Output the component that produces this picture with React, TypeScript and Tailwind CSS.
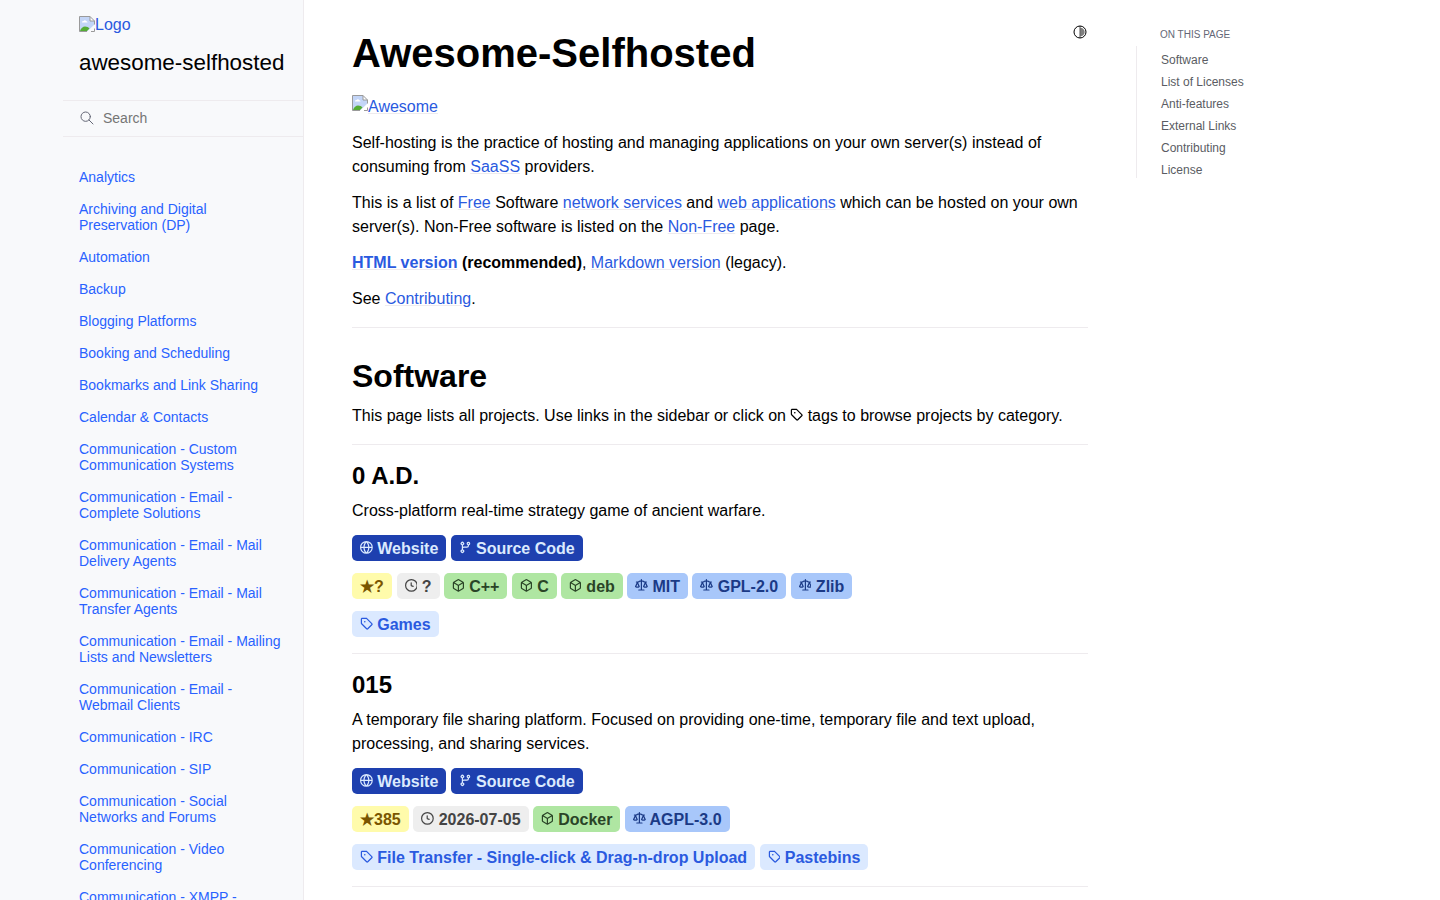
import type { ReactNode } from 'react';
import { clsx } from 'clsx';

const ICONS = {
  tag: 'M1 7.775V2.75C1 1.784 1.784 1 2.75 1h5.025c.464 0 .91.184 1.238.513l6.25 6.25a1.75 1.75 0 0 1 0 2.474l-5.026 5.026a1.75 1.75 0 0 1-2.474 0l-6.25-6.25A1.752 1.752 0 0 1 1 7.775Zm1.5 0c0 .066.026.13.073.177l6.25 6.25a.25.25 0 0 0 .354 0l5.025-5.025a.25.25 0 0 0 0-.354l-6.25-6.25a.25.25 0 0 0-.177-.073H2.75a.25.25 0 0 0-.25.25ZM6 5a1 1 0 1 1 0 2 1 1 0 0 1 0-2Z',
  clock:
    'M8 0a8 8 0 1 1 0 16A8 8 0 0 1 8 0ZM1.5 8a6.5 6.5 0 1 0 13 0 6.5 6.5 0 0 0-13 0Zm7-3.25v2.992l2.028.812a.75.75 0 0 1-.557 1.392l-2.5-1A.751.751 0 0 1 7 8.25v-3.5a.75.75 0 0 1 1.5 0Z',
  globe:
    'M8 0a8 8 0 1 1 0 16A8 8 0 0 1 8 0ZM5.78 8.75a9.64 9.64 0 0 0 1.363 4.177c.255.426.542.832.857 1.215.245-.296.551-.705.857-1.215A9.64 9.64 0 0 0 10.22 8.75Zm4.44-1.5a9.64 9.64 0 0 0-1.363-4.177c-.307-.51-.612-.919-.857-1.215a9.927 9.927 0 0 0-.857 1.215A9.64 9.64 0 0 0 5.78 7.25Zm-5.944 1.5H1.543a6.507 6.507 0 0 0 4.666 5.5c-.123-.181-.24-.365-.352-.552-.715-1.192-1.437-2.874-1.581-4.948Zm-2.733-1.5h2.733c.144-2.074.866-3.756 1.58-4.948.12-.197.237-.381.353-.552a6.507 6.507 0 0 0-4.666 5.5Zm10.181 1.5c-.144 2.074-.866 3.756-1.58 4.948-.12.197-.237.381-.353.552a6.507 6.507 0 0 0 4.666-5.5Zm2.733-1.5a6.507 6.507 0 0 0-4.666-5.5c.123.181.24.365.353.552.714 1.192 1.436 2.874 1.58 4.948Z',
  branch:
    'M9.5 3.25a2.25 2.25 0 1 1 3 2.122V6A2.5 2.5 0 0 1 10 8.5H6a1 1 0 0 0-1 1v1.128a2.251 2.251 0 1 1-1.5 0V5.372a2.25 2.25 0 1 1 1.5 0v1.836A2.493 2.493 0 0 1 6 7h4a1 1 0 0 0 1-1v-.628A2.25 2.25 0 0 1 9.5 3.25Zm-6 0a.75.75 0 1 0 1.5 0 .75.75 0 0 0-1.5 0Zm8.25-.75a.75.75 0 1 0 0 1.5.75.75 0 0 0 0-1.5ZM4.25 12a.75.75 0 1 0 0 1.5.75.75 0 0 0 0-1.5Z',
  package:
    'm8.878.392 5.25 3.045c.54.314.872.89.872 1.514v6.098a1.75 1.75 0 0 1-.872 1.514l-5.25 3.045a1.75 1.75 0 0 1-1.756 0l-5.25-3.045A1.75 1.75 0 0 1 1 11.049V4.951c0-.624.332-1.201.872-1.514L7.122.392a1.75 1.75 0 0 1 1.756 0ZM7.875 1.69l-4.63 2.685L8 7.133l4.755-2.758-4.63-2.685a.248.248 0 0 0-.25 0ZM2.5 5.677v5.372c0 .09.047.171.125.216l4.625 2.683V8.432Zm6.25 8.271 4.625-2.683a.25.25 0 0 0 .125-.216V5.677L8.75 8.432Z',
  law: 'M8.75.75V2h.985c.304 0 .603.08.867.231l1.29.736c.038.022.08.033.124.033h2.234a.75.75 0 0 1 0 1.5h-.427l2.111 4.692a.75.75 0 0 1-.154.838l-.53-.53.529.531-.001.002-.002.002-.006.006-.006.005-.01.01-.045.04c-.21.176-.441.327-.686.45C14.556 10.78 13.88 11 13 11a4.498 4.498 0 0 1-2.023-.454 3.544 3.544 0 0 1-.686-.45l-.045-.04-.016-.015-.006-.006-.004-.004v-.001a.75.75 0 0 1-.154-.838L12.178 4.5h-.162c-.305 0-.604-.079-.868-.231l-1.29-.736a.245.245 0 0 0-.124-.033H8.75V13h2.5a.75.75 0 0 1 0 1.5h-6.5a.75.75 0 0 1 0-1.5h2.5V3.5h-.984a.245.245 0 0 0-.124.033l-1.289.737c-.265.15-.564.23-.869.23h-.162l2.112 4.692a.75.75 0 0 1-.154.838l-.53-.53.529.531-.001.002-.002.002-.006.006-.016.015-.045.04c-.21.176-.441.327-.686.45C4.556 10.78 3.88 11 3 11a4.498 4.498 0 0 1-2.023-.454 3.544 3.544 0 0 1-.686-.45l-.045-.04-.016-.015-.006-.006-.004-.004v-.001a.75.75 0 0 1-.154-.838L2.178 4.5H1.75a.75.75 0 0 1 0-1.5h2.234a.249.249 0 0 0 .125-.033l1.288-.737c.265-.15.564-.23.869-.23h.984V.75a.75.75 0 0 1 1.5 0Zm2.945 8.477c.285.135.718.273 1.305.273s1.02-.138 1.305-.273L13 6.327Zm-10 0c.285.135.718.273 1.305.273s1.02-.138 1.305-.273L3 6.327Z',
};

type IconName = keyof typeof ICONS;

const Octicon: React.FC<{ name: IconName }> = ({ name }) => (
  <svg
    viewBox="0 0 16 16"
    className="mt-px inline-block size-[12.8px] align-text-top"
    fill="currentColor"
    aria-hidden="true"
  >
    <path d={ICONS[name]} />
  </svg>
);

const MissingImage = () => (
  <svg viewBox="0 0 16 16" className="size-4 shrink-0" aria-hidden="true">
    <path d="M.5.5H11L15.5 5v3.5l-7.500 7H.5z" fill="#c3d5f7" />
    <path d="M3 6.5c0-1 .8-1.6 1.6-1.4C5 4 6.8 4 7.2 5.2c1 0 1.3.6 1.3 1.3z" fill="#fff" />
    <path d="M1 15c1-3 3-4.5 5-4.5 2 0 3.5.8 4.5 2L8 15z" fill="#55ad35" />
    <path d="M11 .5V5h4.500" fill="#fff" stroke="#9a9a9a" />
    <path d="M8 15.5H.5V.5H11L15.5 5v3.5M12 15.5h3.500v-3" fill="none" stroke="#9a9a9a" />
  </svg>
);

const BADGE_STYLES = {
  link: 'bg-[#1e40af] text-[#dbeafe]',
  stars: 'mr-[0.3px] bg-[#fffbab] text-[#7a5600]',
  date: 'bg-[#eeeeee] text-[#444444]',
  platform: 'bg-[#afe6a2] text-[#2a4427]',
  license: 'bg-[#a8c7fa] text-[#1b3a86]',
  tag: 'bg-[#dbe9ff] text-[#2a5adf]',
};

interface BadgeData {
  kind: keyof typeof BADGE_STYLES;
  icon?: IconName;
  text: string;
}

const Badge: React.FC<BadgeData> = ({ kind, icon, text }) => (
  <span className={clsx('h-[26px] rounded-[5px] px-2 font-bold leading-[27px] whitespace-pre', BADGE_STYLES[kind])}>
    {icon && <Octicon name={icon} />}
    {icon ? ` ${text}` : text}
  </span>
);

const A: React.FC<{ children: ReactNode }> = ({ children }) => (
  <a href="#" className="text-[#2a5adf] underline decoration-[#eeebee] decoration-1">
    {children}
  </a>
);

const SIDEBAR_LINKS = [
  'Analytics',
  'Archiving and Digital Preservation (DP)',
  'Automation',
  'Backup',
  'Blogging Platforms',
  'Booking and Scheduling',
  'Bookmarks and Link Sharing',
  'Calendar & Contacts',
  'Communication - Custom Communication Systems',
  'Communication - Email - Complete Solutions',
  'Communication - Email - Mail Delivery Agents',
  'Communication - Email - Mail Transfer Agents',
  'Communication - Email - Mailing Lists and Newsletters',
  'Communication - Email - Webmail Clients',
  'Communication - IRC',
  'Communication - SIP',
  'Communication - Social Networks and Forums',
  'Communication - Video Conferencing',
  'Communication - XMPP - Servers',
];

const TOC = ['Software', 'List of Licenses', 'Anti-features', 'External Links', 'Contributing', 'License'];

const LINK_BADGES: BadgeData[] = [
  { kind: 'link', icon: 'globe', text: 'Website' },
  { kind: 'link', icon: 'branch', text: 'Source Code' },
];

const PROJECTS: { name: string; description: string; rows: BadgeData[][] }[] = [
  {
    name: '0 A.D.',
    description: 'Cross-platform real-time strategy game of ancient warfare.',
    rows: [
      LINK_BADGES,
      [
        { kind: 'stars', text: '★?' },
        { kind: 'date', icon: 'clock', text: '?' },
        { kind: 'platform', icon: 'package', text: 'C++' },
        { kind: 'platform', icon: 'package', text: 'C' },
        { kind: 'platform', icon: 'package', text: 'deb' },
        { kind: 'license', icon: 'law', text: 'MIT' },
        { kind: 'license', icon: 'law', text: 'GPL-2.0' },
        { kind: 'license', icon: 'law', text: 'Zlib' },
      ],
      [{ kind: 'tag', icon: 'tag', text: 'Games' }],
    ],
  },
  {
    name: '015',
    description:
      'A temporary file sharing platform. Focused on providing one-time, temporary file and text upload, processing, and sharing services.',
    rows: [
      LINK_BADGES,
      [
        { kind: 'stars', text: '★385' },
        { kind: 'date', icon: 'clock', text: '2026-07-05' },
        { kind: 'platform', icon: 'package', text: 'Docker' },
        { kind: 'license', icon: 'law', text: 'AGPL-3.0' },
      ],
      [
        { kind: 'tag', icon: 'tag', text: 'File Transfer - Single-click & Drag-n-drop Upload' },
        { kind: 'tag', icon: 'tag', text: 'Pastebins' },
      ],
    ],
  },
];

const Sidebar = () => (
  <aside className="flex w-[304px] shrink-0 justify-end border-r border-[#eeebee] bg-[#f8f9fb]">
    <div className="w-60">
      <a href="#" className="block px-4 pt-4">
        <span className="flex h-[18px] items-start text-[#2a5adf]">
          <MissingImage />
          <span className="leading-[18px]">Logo</span>
        </span>
        <span className="mt-3.5 block h-[52px] text-[22.4px] leading-[30px] text-black">awesome-selfhosted</span>
      </a>
      <div className="flex h-[37px] items-center border-y border-[#eeebee] pl-4">
        <svg
          viewBox="0 0 24 24"
          className="mb-px size-4 text-[#646776]"
          fill="none"
          stroke="currentColor"
          strokeWidth="1.5"
          strokeLinecap="round"
        >
          <circle cx="10" cy="10" r="7" />
          <path d="m21 21-6-6" />
        </svg>
        <span className="ml-2 pb-px text-sm leading-4 text-[#757575]">Search</span>
      </div>
      <nav className="mt-6">
        {SIDEBAR_LINKS.map((link) => (
          <a key={link} href="#" className="block px-4 py-2 text-sm leading-4 text-[#2962ff]">
            {link}
          </a>
        ))}
      </nav>
    </div>
  </aside>
);

const Project: React.FC<(typeof PROJECTS)[number]> = ({ name, description, rows }) => (
  <section className="border-b border-[#eeebee] pt-4 pb-4">
    <h3 className="text-2xl leading-[30px] font-bold">{name}</h3>
    <p className="mt-2">{description}</p>
    {rows.map((badges, i) => (
      <p key={i} className="mt-3 flex gap-[4.45px]">
        {badges.map((badge) => (
          <Badge key={badge.text} {...badge} />
        ))}
      </p>
    ))}
  </section>
);

const ThemeIcon = () => (
  <svg viewBox="0 0 24 24" className="size-4" fill="none" stroke="currentColor" strokeWidth="1.5" aria-hidden="true">
    <circle cx="12" cy="12" r="9" />
    <path d="M12 3v18" strokeWidth="1" />
    <path d="M12.5 5.5a6.500 6.500 0 0 1 0 13z" fill="currentColor" fillOpacity=".5" stroke="none" />
  </svg>
);

export default function App() {
  return (
    <div className="flex h-screen overflow-hidden bg-white font-['Liberation_Sans',sans-serif] text-base text-black">
      <Sidebar />
      <main className="ml-12 w-[736px] shrink-0">
        <header className="flex items-start justify-between">
          <h1 className="pt-7 text-[40px] leading-[50px] font-bold">Awesome-Selfhosted</h1>
          <button className="mt-6" aria-label="Toggle theme">
            <ThemeIcon />
          </button>
        </header>
        <div className="mt-[17px] flex flex-col gap-3 border-b border-[#eeebee] pb-4">
          <p className="flex">
            <MissingImage />
            <A>Awesome</A>
          </p>
          <p>
            Self-hosting is the practice of hosting and managing applications on your own server(s) instead of consuming
            from <A>SaaSS</A> providers.
          </p>
          <p>
            This is a list of <A>Free</A> Software <A>network services</A> and <A>web applications</A> which can be
            hosted on your own server(s). Non-Free software is listed on the <A>Non-Free</A> page.
          </p>
          <p>
            <strong>
              <A>HTML version</A> (recommended)
            </strong>
            , <A>Markdown version</A> (legacy).
          </p>
          <p>
            See <A>Contributing</A>.
          </p>
        </div>
        <div className="border-b border-[#eeebee] pt-7 pb-4">
          <h2 className="text-[32px] leading-10 font-bold">Software</h2>
          <p className="mt-2">
            This page lists all projects. Use links in the sidebar or click on <Octicon name="tag" /> tags to browse
            projects by category.
          </p>
        </div>
        {PROJECTS.map((project) => (
          <Project key={project.name} {...project} />
        ))}
      </main>
      <aside className="ml-12 pt-7">
        <div className="pl-6 text-[10px] leading-[14px] text-[#646776] uppercase">On this page</div>
        <ul className="mt-1 h-[132px] border-l border-[#eeebee] pt-[3px] pl-6 text-xs leading-[22px] text-[#5a5c63]">
          {TOC.map((item) => (
            <li key={item}>{item}</li>
          ))}
        </ul>
      </aside>
    </div>
  );
}
